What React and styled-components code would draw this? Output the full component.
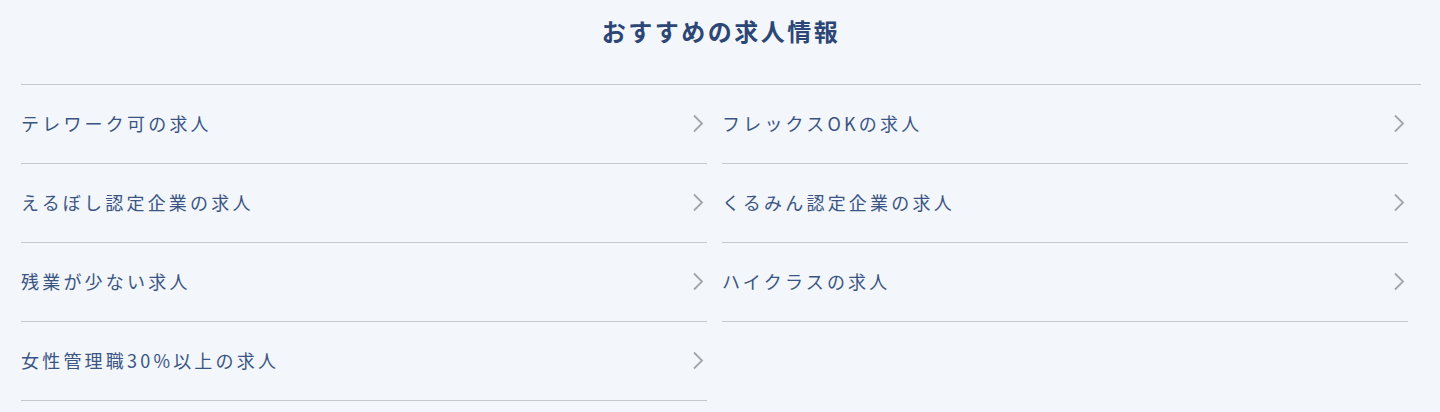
import React from "react";
import styled, { createGlobalStyle } from "styled-components";

const GlobalStyle = createGlobalStyle`
  body {
    margin: 0;
    background-color: #f3f6fb;
    font-family: "Noto Sans CJK JP", "Noto Sans", sans-serif;
  }
`

const Section = styled.section`
  width: 1400px;
  margin-left: 21px;
`

const Title = styled.h2`
  margin: 0;
  padding-top: 15px;
  height: 69px;
  line-height: 32px;
  text-align: center;
  font-size: 24px;
  font-weight: 700;
  letter-spacing: 2.5px;
  color: #2c4675;
  border-bottom: 1px solid #c6c8cc;
`

const List = styled.ul`
  display: grid;
  grid-template-columns: 686px 686px;
  column-gap: 15px;
  margin: 0;
  padding: 0;
  list-style: none;
`

const Item = styled.li`
  display: flex;
  align-items: center;
  justify-content: space-between;
  height: 76px;
  padding: 0 3px 2px 0;
  border-bottom: 1px solid #c6c8cc;
  font-size: 18px;
  letter-spacing: 3.2px;
  color: #3a5583;
  cursor: pointer;
`

const Chevron = () => (
  <svg width="12" height="19" viewBox="0 0 12 19" fill="none">
    <path d="M2 1.5 L10 9.5 L2 17.5" stroke="#a3a5a8" strokeWidth="1.8" />
  </svg>
)

const items = [
  "テレワーク可の求人",
  "フレックスOKの求人",
  "えるぼし認定企業の求人",
  "くるみん認定企業の求人",
  "残業が少ない求人",
  "ハイクラスの求人",
  "女性管理職30%以上の求人",
]

const App = () => {
  return (
    <>
      <GlobalStyle />
      <Section>
        <Title>おすすめの求人情報</Title>
        <List>
          {items.map((label) => (
            <Item key={label}>
              <span>{label}</span>
              <Chevron />
            </Item>
          ))}
        </List>
      </Section>
    </>
  )
}

export default App;
